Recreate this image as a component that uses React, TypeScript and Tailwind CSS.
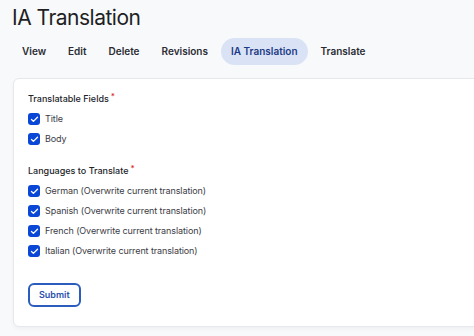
import { Check } from "lucide-react"

const tabs = ["View", "Edit", "Delete", "Revisions", "IA Translation", "Translate"]

const fields = ["Title", "Body"]

const languages = [
  "German (Overwrite current translation)",
  "Spanish (Overwrite current translation)",
  "French (Overwrite current translation)",
  "Italian (Overwrite current translation)",
]

function CheckRow({ label }: { label: string }) {
  return (
    <label className="flex h-5 items-center gap-[5px] text-[9px] tracking-[-0.1px] text-[#3b3b45]">
      <span className="flex h-[12px] w-[12px] items-center justify-center rounded-[3px] bg-[#0a47d6]">
        <Check className="h-[9px] w-[9px] text-white" strokeWidth={3.5} />
      </span>
      {label}
    </label>
  )
}

function FieldGroup({ title, items }: { title: string; items: string[] }) {
  return (
    <fieldset>
      <div className="mb-[1px] h-[19px] text-[9px] leading-[19px] font-medium text-[#232429]">
        {title}
        <span className="ml-[2px] align-top text-[8px] leading-[14px] text-[#d72222]">*</span>
      </div>
      <div className="flex flex-col">
        {items.map((item) => (
          <CheckRow key={item} label={item} />
        ))}
      </div>
    </fieldset>
  )
}

export default function App() {
  return (
    <div className="h-[336px] w-[474px] overflow-hidden bg-[#f8f9fb] font-['Inter',sans-serif]">
      <h1 className="px-[12px] pt-[3px] text-[21px] leading-[30px] font-normal tracking-[-0.5px] text-[#1f1f24]">
        IA Translation
      </h1>

      <nav className="mt-[6px] flex h-[24px] items-center px-[11px] text-[10px] font-semibold text-[#2b2c33]">
        {tabs.map((tab) =>
          tab === "IA Translation" ? (
            <span key={tab} className="mx-[2px] rounded-full bg-[#dae3f6] px-[10px] py-[6px] text-[#1c3a85]">
              {tab}
            </span>
          ) : (
            <span key={tab} className="px-[11px] py-[6px]">
              {tab}
            </span>
          )
        )}
      </nav>

      <div className="mt-[15px] ml-[13px] w-[480px] rounded-[6px] border border-[#e6e8ee] bg-white px-[14px] pt-[10px] pb-[19px] shadow-[0_2px_4px_rgba(0,0,0,0.04)]">
        <FieldGroup title="Translatable Fields" items={fields} />
        <div className="h-[12px]" />
        <FieldGroup title="Languages to Translate" items={languages} />

        <button className="mt-[22px] h-[24px] rounded-[6px] border-2 border-[#2c5cbd] px-[9px] text-[9px] font-semibold text-[#2750ad]">
          Submit
        </button>
      </div>
    </div>
  )
}
